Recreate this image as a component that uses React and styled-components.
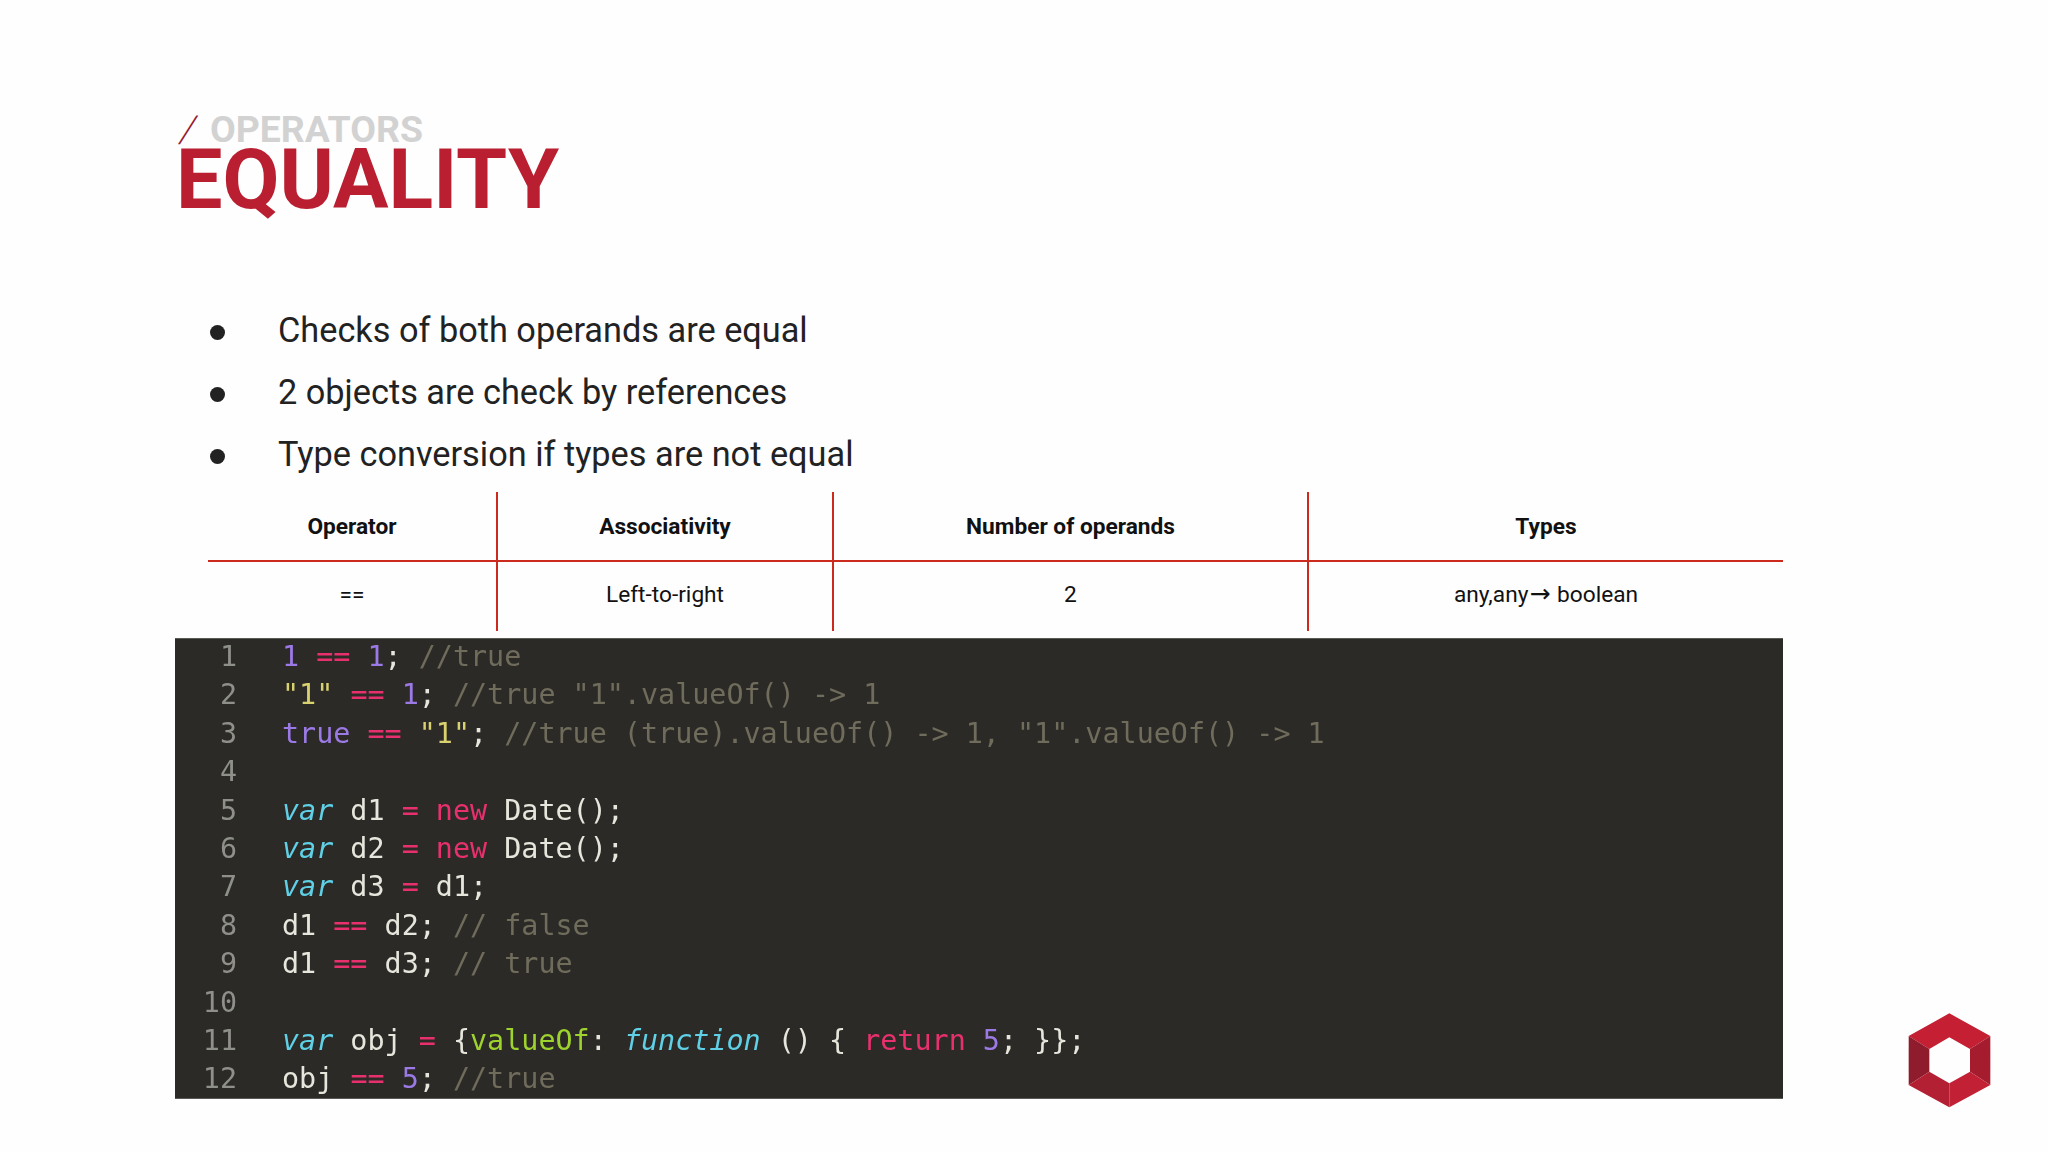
import React from "react";
import styled, { createGlobalStyle } from "styled-components";

const GlobalStyle = createGlobalStyle`
	html, body {
		margin: 0;
		padding: 0;
		background: #fefefe;
	}
`;

const Slide = styled.div`
	box-sizing: border-box;
	width: 2048px;
	height: 1152px;
	padding: 116px 0 0 175px;
	display: flex;
	font-family: Roboto, "Liberation Sans", sans-serif;
	overflow: hidden;
`;

const Main = styled.main`
	width: 1608px;
	flex: none;
`;

const Kicker = styled.div`
	display: flex;
	align-items: baseline;
	gap: 14px;
	padding-left: 6px;
	height: 27px;
	font-size: 37.4px;
	line-height: 27px;
	font-weight: 700;
	color: #d2d2d2;
`;

const Slash = styled.span`
	display: inline-block;
	font-weight: 300;
	color: #951c30;
	transform: skewX(-14deg);
`;

const Title = styled.h1`
	margin: 1px 0 0 1px;
	font-size: 82.6px;
	line-height: 72px;
	font-weight: 700;
	color: #b91f30;
`;

const Points = styled.ul`
	list-style: none;
	margin: 83px 0 0;
	padding: 0 0 0 35px;
`;

const Point = styled.li`
	display: flex;
	align-items: center;
	gap: 53px;
	height: 62px;
	font-size: 34.3px;
	color: #222;
`;

const Dot = styled.span`
	width: 15px;
	height: 15px;
	margin-top: 4px;
	border-radius: 50%;
	background: #222;
`;

const Table = styled.table`
	width: 1575px;
	margin: 7px 0 0 33px;
	border-collapse: collapse;
	table-layout: fixed;
	font-size: 22.7px;
	color: #111;
`;

const Cell = styled.td`
	box-sizing: border-box;
	height: 70px;
	padding: 0 0 4px;
	text-align: center;
	border-left: 2px solid #cc2a1c;
	&:first-child {
		border-left: 0;
	}
`;

const HeadCell = styled(Cell).attrs({ as: "th" })`
	height: 69px;
	padding: 0;
	font-weight: 700;
	border-bottom: 2px solid #cc2a1c;
`;

const Arrow = styled.span`
	margin: 0 1px;
	font-family: "DejaVu Sans", sans-serif;
	font-size: 25px;
	line-height: 1;
`;

const Code = styled.pre`
	margin: 7px 0 0;
	height: 461px;
	background: #2b2a26;
	box-shadow: inset 0 1px 0 #5a5a54, inset 0 -1px 0 #5a5a54;
	font-family: "DejaVu Sans Mono", "Liberation Mono", monospace;
	font-size: 28.4px;
	color: #e6e6dc;
	overflow: hidden;
`;

const Line = styled.div`
	display: flex;
	gap: 45px;
	height: 38.4px;
	line-height: 38.4px;
	filter: blur(0.4px);
`;

const LineNo = styled.span`
	width: 62px;
	text-align: right;
	color: #8f908a;
`;

const tokenColors = {
	num: "#9c7ae6",
	op: "#e8306e",
	str: "#d9d070",
	com: "#6f6c5c",
	kw: "#e8306e",
	fn: "#5fd0e6",
	prop: "#9ed32e",
};

const Token = styled.span`
	color: ${props => tokenColors[props.$kind] || "inherit"};
	font-style: ${props => (props.$kind === "fn" ? "italic" : "normal")};
`;

const Aside = styled.aside`
	flex: none;
	align-self: flex-end;
	margin: 0 0 22px 103px;
	line-height: 0;
`;

// [kind, text] pairs, one array per source line
const codeLines = [
	[["num", "1"], ["", " "], ["op", "=="], ["", " "], ["num", "1"], ["", "; "], ["com", "//true"]],
	[["str", '"1"'], ["", " "], ["op", "=="], ["", " "], ["num", "1"], ["", "; "], ["com", '//true "1".valueOf() -> 1']],
	[["num", "true"], ["", " "], ["op", "=="], ["", " "], ["str", '"1"'], ["", "; "], ["com", '//true (true).valueOf() -> 1, "1".valueOf() -> 1']],
	[],
	[["fn", "var"], ["", " d1 "], ["op", "="], ["", " "], ["kw", "new"], ["", " Date();"]],
	[["fn", "var"], ["", " d2 "], ["op", "="], ["", " "], ["kw", "new"], ["", " Date();"]],
	[["fn", "var"], ["", " d3 "], ["op", "="], ["", " d1;"]],
	[["", "d1 "], ["op", "=="], ["", " d2; "], ["com", "// false"]],
	[["", "d1 "], ["op", "=="], ["", " d3; "], ["com", "// true"]],
	[],
	[["fn", "var"], ["", " obj "], ["op", "="], ["", " {"], ["prop", "valueOf"], ["", ": "], ["fn", "function"], ["", " () { "], ["kw", "return"], ["", " "], ["num", "5"], ["", "; }};"]],
	[["", "obj "], ["op", "=="], ["", " "], ["num", "5"], ["", "; "], ["com", "//true"]],
];

const points = [
	"Checks of both operands are equal",
	"2 objects are check by references",
	"Type conversion if types are not equal",
];

const columns = [
	{ title: "Operator", value: "==", width: 289 },
	{ title: "Associativity", value: "Left-to-right", width: 336 },
	{ title: "Number of operands", value: "2", width: 475 },
	{
		title: "Types",
		value: (
			<>
				any,any<Arrow>→</Arrow> boolean
			</>
		),
		width: 475,
	},
];

const Logo = () => (
	<svg width="130" height="130" viewBox="20 0 390 390">
		<polygon points="88,108 210,40 333,108 272,147 210,112 150,147" fill="#c41f33" />
		<polygon points="88,108 150,147 150,215 88,255" fill="#8f1c2c" />
		<polygon points="333,108 333,255 272,215 272,147" fill="#a51c2e" />
		<polygon points="88,255 150,215 210,250 210,322" fill="#b32033" />
		<polygon points="333,255 210,322 210,250 272,215" fill="#c22034" />
	</svg>
);

export default function App() {
	return (
		<Slide>
			<GlobalStyle />
			<Main>
				<Kicker>
					<Slash>/</Slash>
					<span>OPERATORS</span>
				</Kicker>
				<Title>EQUALITY</Title>
				<Points>
					{points.map(point => (
						<Point key={point}>
							<Dot />
							<span>{point}</span>
						</Point>
					))}
				</Points>
				<Table>
					<colgroup>
						{columns.map(col => (
							<col key={col.title} width={col.width} />
						))}
					</colgroup>
					<thead>
						<tr>
							{columns.map(col => (
								<HeadCell key={col.title}>{col.title}</HeadCell>
							))}
						</tr>
					</thead>
					<tbody>
						<tr>
							{columns.map(col => (
								<Cell key={col.title}>{col.value}</Cell>
							))}
						</tr>
					</tbody>
				</Table>
				<Code>
					{codeLines.map((tokens, i) => (
						<Line key={i}>
							<LineNo>{i + 1}</LineNo>
							<span>
								{tokens.map(([kind, text], j) => (
									<Token key={j} $kind={kind}>
										{text}
									</Token>
								))}
							</span>
						</Line>
					))}
				</Code>
			</Main>
			<Aside>
				<Logo />
			</Aside>
		</Slide>
	);
}
